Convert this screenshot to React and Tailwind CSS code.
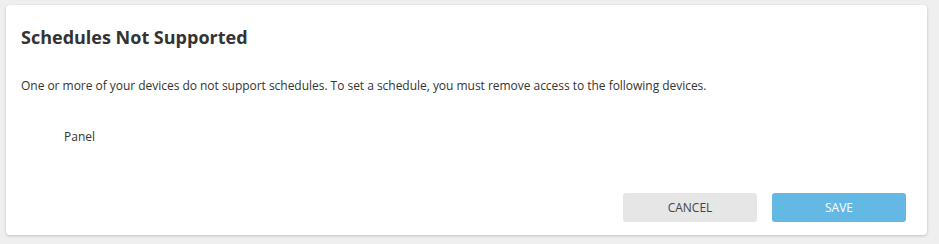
export default function App() {
  return (
    <div className="w-[939px] h-[244px] bg-[#efefef] pt-[5px] pl-[6px]" style={{ fontFamily: '"Open Sans", "Noto Sans", sans-serif' }}>
      <div className="w-[921px] h-[230px] bg-white rounded-[4px] shadow-[0_1px_3px_rgba(0,0,0,0.2)] flex flex-col">
        <h1 className="pl-[15px] pt-[20px] text-[18px] leading-[24px] font-bold text-[#333]">Schedules Not Supported</h1>
        <p className="pl-[15px] mt-[29px] text-[12px] leading-[16px] text-[#333] tracking-[-0.03px]">One or more of your devices do not support schedules. To set a schedule, you must remove access to the following devices.</p>
        <p className="pl-[58px] mt-[35px] text-[12px] leading-[16px] text-[#333]">Panel</p>
        <div className="mt-auto mb-[13px] mr-[21px] flex justify-end gap-[15px]">
          <button className="w-[134px] h-[29px] rounded-[3px] bg-[#e6e6e6] text-[12px] text-[#444]">CANCEL</button>
          <button className="w-[134px] h-[29px] rounded-[3px] bg-[#64b8e4] text-[12px] text-white">SAVE</button>
        </div>
      </div>
    </div>
  );
}
